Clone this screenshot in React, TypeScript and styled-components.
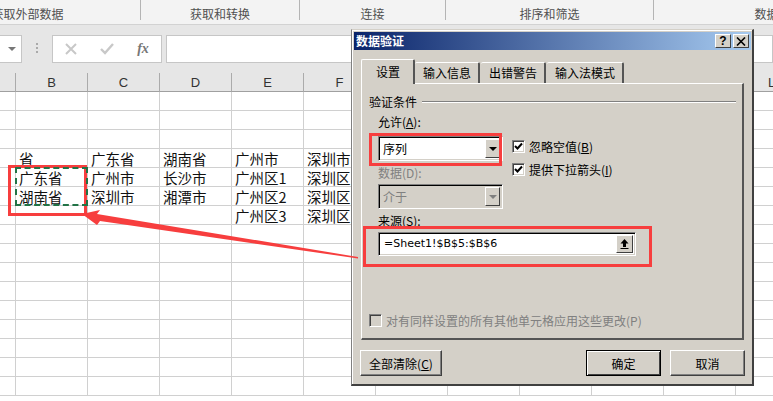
import React from "react";
import styled, { createGlobalStyle } from "styled-components";

const GlobalStyle = createGlobalStyle`
  html, body {
    margin: 0;
    padding: 0;
    background: #fff;
  }
  * {
    box-sizing: border-box;
  }
`;

const CJK = `"Noto Sans CJK SC", "Liberation Sans", sans-serif`;

const Page = styled.div`
  position: relative;
  width: 773px;
  height: 401px;
  overflow: hidden;
  background: #fff;
  font-family: ${CJK};
`;

const Ribbon = styled.div`
  display: grid;
  grid-template-columns: 226px 159px 146px 208px 250px;
  width: 989px;
  height: 25px;
  margin-left: -85px;
  background: #f3f3f3;
  border-bottom: 1px solid #d2d2d2;
`;

const RibbonGroup = styled.div`
  height: 20px;
  padding-top: 7px;
  font-size: 12px;
  line-height: 14px;
  color: #505050;
  text-align: center;
  border-right: 1px solid #b4b4b4;
`;

const FormulaBar = styled.div`
  display: flex;
  align-items: center;
  height: 48px;
  padding-bottom: 1px;
  background: #e6e6e6;
`;

const NameBox = styled.div`
  display: flex;
  align-items: center;
  justify-content: flex-end;
  width: 22px;
  height: 28px;
  padding-right: 5px;
  background: #fff;
  border: 1px solid #c6c6c6;
  border-left: 0;
`;

const SmallCaret = styled.span`
  width: 0;
  height: 0;
  border-left: 4px solid transparent;
  border-right: 4px solid transparent;
  border-top: 4px solid #777;
`;

const Grip = styled.div`
  width: 2px;
  height: 11px;
  margin: 0 14px;
  background: repeating-linear-gradient(#aaa 0 2px, transparent 2px 4px);
`;

const FormulaButtons = styled.div`
  display: grid;
  grid-template-columns: repeat(3, 36px);
  align-items: center;
  justify-items: center;
  width: 110px;
  height: 28px;
  background: #fff;
  border: 1px solid #c6c6c6;
`;

const FxLabel = styled.span`
  font-family: "Liberation Serif", serif;
  font-size: 14px;
  font-style: italic;
  font-weight: bold;
  color: #777;
`;

const FormulaInput = styled.div`
  flex: 1;
  height: 28px;
  margin-left: 4px;
  background: #fff;
  border: 1px solid #c6c6c6;
`;

const Sheet = styled.div`
  display: grid;
  grid-template-columns: 16px repeat(11, 72px);
  grid-auto-rows: 19px;
  width: 808px;
`;

const ColumnHead = styled.div`
  height: 19px;
  padding-top: 2px;
  font-family: "Liberation Sans", sans-serif;
  font-size: 13px;
  line-height: 16px;
  color: #333;
  text-align: center;
  background: #e6e6e6;
  border-right: 1px solid #ababab;
  border-bottom: 1px solid #a0a0a0;
`;

const Cell = styled.div`
  overflow: hidden;
  padding-left: 3px;
  font-size: 14.5px;
  line-height: 19px;
  white-space: nowrap;
  color: #111;
  border-right: 1px solid #d0d0d0;
  border-bottom: 1px solid #d0d0d0;
`;

const CopyMarquee = styled.div`
  position: absolute;
  left: 15px;
  top: 167px;
  width: 73px;
  height: 39px;
  border: 2px dashed #217346;
`;

const Callout = styled.div<{ $x: number; $y: number; $w: number; $h: number }>`
  position: absolute;
  left: ${(p) => p.$x}px;
  top: ${(p) => p.$y}px;
  width: ${(p) => p.$w}px;
  height: ${(p) => p.$h}px;
  border: 3px solid #f73e3e;
  pointer-events: none;
`;

const ArrowLayer = styled.svg`
  position: absolute;
  left: 0;
  top: 0;
  pointer-events: none;
`;

const Dialog = styled.div`
  position: absolute;
  left: 351px;
  top: 29px;
  width: 403px;
  height: 357px;
  padding: 2px 1px 0 2px;
  font-size: 12px;
  color: #000;
  background: #d4d0c8;
  border-right: 2px solid #404040;
  border-bottom: 2px solid #404040;
  border-top: 1px solid #d4d0c8;
  border-left: 1px solid #808080;
  box-shadow: inset 1px 1px 0 #fff;
`;

const TitleBar = styled.div`
  display: flex;
  align-items: center;
  justify-content: space-between;
  height: 18px;
  padding: 0 2px;
  background: linear-gradient(90deg, #0a246a, #a6caf0);
`;

const TitleText = styled.span`
  font-size: 12px;
  font-weight: bold;
  line-height: 14px;
  color: #fff;
`;

const TitleButtons = styled.div`
  display: flex;
  gap: 2px;
`;

const TitleButton = styled.div`
  display: flex;
  align-items: center;
  justify-content: center;
  width: 16px;
  height: 14px;
  font-family: "Liberation Sans", sans-serif;
  font-size: 12px;
  font-weight: bold;
  background: #d4d0c8;
  border: 1px solid;
  border-color: #fff #404040 #404040 #fff;
`;

const Content = styled.div`
  padding: 9px 7px 0;
`;

const TabRow = styled.div`
  display: flex;
  align-items: flex-end;
  height: 24px;
`;

const Tab = styled.div<{ $active?: boolean }>`
  position: relative;
  height: ${(p) => (p.$active ? 25 : 21)}px;
  margin-right: ${(p) => (p.$active ? 0 : 1)}px;
  margin-bottom: ${(p) => (p.$active ? -1 : 0)}px;
  padding: ${(p) => (p.$active ? "5px 13px 0 14px" : "3px 7px 0 8px")};
  font-size: 12px;
  line-height: 14px;
  white-space: nowrap;
  background: #d4d0c8;
  border-top: 1px solid #fff;
  border-left: ${(p) => (p.$active ? "1px solid #fff" : "0")};
  border-right: 2px solid #555;
  border-radius: 2px 2px 0 0;
  z-index: ${(p) => (p.$active ? 1 : 0)};
`;

const TabPanel = styled.div`
  display: flex;
  flex-direction: column;
  height: 257px;
  padding: 11px 7px 11px 7px;
  border-top: 1px solid #fff;
  border-left: 1px solid #fff;
  border-right: 2px solid #555;
  border-bottom: 2px solid #555;
`;

const Legend = styled.div`
  display: flex;
  align-items: center;
  gap: 5px;
  height: 14px;
  line-height: 14px;
  white-space: nowrap;
`;

const LegendRule = styled.span`
  flex: none;
  width: 314px;
  height: 2px;
  border-top: 1px solid #808080;
  border-bottom: 1px solid #fff;
`;

const Fields = styled.div`
  margin-left: 9px;
  padding-top: 6px;
`;

const TopFields = styled.div`
  display: flex;
`;

const FieldColumn = styled.div`
  width: 125px;
`;

const FieldLabel = styled.div<{ $disabled?: boolean; $gap: number }>`
  height: 14px;
  margin-bottom: ${(p) => p.$gap}px;
  line-height: 14px;
  white-space: nowrap;
  color: ${(p) => (p.$disabled ? "#808080" : "#000")};
`;

const SunkenBox = styled.div<{ $disabled?: boolean; $width: number; $height: number }>`
  display: flex;
  align-items: center;
  justify-content: space-between;
  width: ${(p) => p.$width}px;
  height: ${(p) => p.$height}px;
  padding: 2px;
  color: ${(p) => (p.$disabled ? "#808080" : "#000")};
  background: ${(p) => (p.$disabled ? "#d4d0c8" : "#fff")};
  border: 1px solid;
  border-color: #808080 #fff #fff #808080;
  box-shadow: inset 1px 1px 0 #000, inset -1px -1px 0 #d4d0c8;
`;

const BoxText = styled.span`
  padding-left: 2px;
  font-size: 12px;
  line-height: 16px;
`;

const SourceText = styled.span`
  padding-left: 3px;
  font-family: "DejaVu Sans", sans-serif;
  font-size: 11px;
  line-height: 14px;
`;

const BoxButton = styled.div<{ $width: number }>`
  display: flex;
  align-items: center;
  justify-content: center;
  flex: none;
  align-self: stretch;
  width: ${(p) => p.$width}px;
  background: #d4d0c8;
  border: 1px solid;
  border-color: #fff #404040 #404040 #fff;
`;

const DownCaret = styled.span<{ $disabled?: boolean }>`
  width: 0;
  height: 0;
  border-left: 4px solid transparent;
  border-right: 4px solid transparent;
  border-top: 4px solid ${(p) => (p.$disabled ? "#808080" : "#000")};
`;

const SecondLabel = styled.div`
  margin-top: 5px;
`;

const Checks = styled.div`
  display: flex;
  flex-direction: column;
  gap: 10px;
  margin-left: 9px;
  padding-top: 25px;
`;

const CheckRow = styled.div<{ $disabled?: boolean }>`
  display: flex;
  align-items: center;
  gap: 4px;
  height: 13px;
  white-space: nowrap;
  line-height: 14px;
  color: ${(p) => (p.$disabled ? "#808080" : "#000")};
`;

const CheckBox = styled.span<{ $disabled?: boolean }>`
  display: flex;
  flex: none;
  width: 13px;
  height: 13px;
  background: ${(p) => (p.$disabled ? "#d4d0c8" : "#fff")};
  border: 1px solid;
  border-color: #808080 #fff #fff #808080;
  box-shadow: inset 1px 1px 0 #404040, inset -1px -1px 0 #d4d0c8;
`;

const ApplyAll = styled.div`
  margin-top: auto;
`;

const Footer = styled.div`
  display: flex;
  margin: 10px -1px 0;
`;

const PushButton = styled.div<{ $width: number; $primary?: boolean; $push?: boolean }>`
  display: flex;
  align-items: center;
  justify-content: center;
  width: ${(p) => p.$width}px;
  height: 26px;
  margin-left: ${(p) => (p.$push ? "auto" : 0)};
  margin-right: ${(p) => (p.$primary ? 9 : 0)}px;
  font-size: 12px;
  background: #d4d0c8;
  border: 1px solid;
  border-color: ${(p) => (p.$primary ? "#000" : "#fff #404040 #404040 #fff")};
  box-shadow: ${(p) =>
    p.$primary
      ? "inset 1px 1px 0 #fff, inset -1px -1px 0 #404040"
      : "inset -1px -1px 0 #808080"};
`;

const columns = ["", "B", "C", "D", "E", "F", "G", "H", "I", "J", "K", "L"];

const rows: string[][] = [
  [],
  [],
  [],
  ["", "省", "广东省", "湖南省", "广州市", "深圳市"],
  ["", "广东省", "广州市", "长沙市", "广州区1", "深圳区"],
  ["", "湖南省", "深圳市", "湘潭市", "广州区2", "深圳区"],
  ["", "", "", "", "广州区3", "深圳区"],
  [], [], [], [], [], [], [], [], [],
];

function Tick() {
  return (
    <svg width="11" height="11" viewBox="0 0 11 11">
      <path d="M2 5 L4.5 7.5 L9 2.5" fill="none" stroke="#000" strokeWidth="2" />
    </svg>
  );
}

export default function App() {
  return (
    <Page>
      <GlobalStyle />
      <Ribbon>
        <RibbonGroup>获取外部数据</RibbonGroup>
        <RibbonGroup>获取和转换</RibbonGroup>
        <RibbonGroup>连接</RibbonGroup>
        <RibbonGroup>排序和筛选</RibbonGroup>
        <RibbonGroup>数据工具</RibbonGroup>
      </Ribbon>

      <FormulaBar>
        <NameBox>
          <SmallCaret />
        </NameBox>
        <Grip />
        <FormulaButtons>
          <svg width="12" height="12" viewBox="0 0 12 12">
            <path d="M1 1 L11 11 M11 1 L1 11" stroke="#c8c8c8" strokeWidth="2" />
          </svg>
          <svg width="14" height="12" viewBox="0 0 14 12">
            <path d="M1 6 L5 10 L13 1" fill="none" stroke="#c8c8c8" strokeWidth="2.4" />
          </svg>
          <FxLabel>fx</FxLabel>
        </FormulaButtons>
        <FormulaInput />
      </FormulaBar>

      <Sheet>
        {columns.map((name, i) => (
          <ColumnHead key={i}>{name}</ColumnHead>
        ))}
        {rows.map((row, r) =>
          columns.map((_, c) => <Cell key={`${r}-${c}`}>{row[c] ?? ""}</Cell>)
        )}
      </Sheet>

      <Callout $x={8} $y={165} $w={79} $h={51} />
      <CopyMarquee />

      <Dialog>
        <TitleBar>
          <TitleText>数据验证</TitleText>
          <TitleButtons>
            <TitleButton>?</TitleButton>
            <TitleButton>
              <svg width="10" height="9" viewBox="0 0 10 9">
                <path d="M1 0.5 L9 8.5 M9 0.5 L1 8.5" stroke="#000" strokeWidth="1.6" />
              </svg>
            </TitleButton>
          </TitleButtons>
        </TitleBar>
        <Content>
          <TabRow>
            <Tab $active>设置</Tab>
            <Tab>输入信息</Tab>
            <Tab>出错警告</Tab>
            <Tab>输入法模式</Tab>
          </TabRow>
          <TabPanel>
            <Legend>
              验证条件
              <LegendRule />
            </Legend>
            <Fields>
              <TopFields>
                <FieldColumn>
                  <FieldLabel $gap={7}>
                    允许(<u>A</u>):
                  </FieldLabel>
                  <SunkenBox $width={125} $height={25}>
                    <BoxText>序列</BoxText>
                    <BoxButton $width={15}>
                      <DownCaret />
                    </BoxButton>
                  </SunkenBox>
                  <SecondLabel>
                    <FieldLabel $disabled $gap={4}>
                      数据(D):
                    </FieldLabel>
                  </SecondLabel>
                  <SunkenBox $disabled $width={125} $height={25}>
                    <BoxText>介于</BoxText>
                    <BoxButton $width={15}>
                      <DownCaret $disabled />
                    </BoxButton>
                  </SunkenBox>
                </FieldColumn>
                <Checks>
                  <CheckRow>
                    <CheckBox>
                      <Tick />
                    </CheckBox>
                    <span>
                      忽略空值(<u>B</u>)
                    </span>
                  </CheckRow>
                  <CheckRow>
                    <CheckBox>
                      <Tick />
                    </CheckBox>
                    <span>
                      提供下拉箭头(<u>I</u>)
                    </span>
                  </CheckRow>
                </Checks>
              </TopFields>
              <SecondLabel>
                <FieldLabel $gap={4}>来源(S):</FieldLabel>
              </SecondLabel>
              <SunkenBox $width={258} $height={24}>
                <SourceText>=Sheet1!$B$5:$B$6</SourceText>
                <BoxButton $width={17}>
                  <svg width="11" height="12" viewBox="0 0 11 12">
                    <path d="M5.5 1 L9.5 5.5 H7 V9 H4 V5.5 H1.5 Z" fill="#000" />
                    <path d="M1.5 10.5 H9.5" stroke="#000" strokeWidth="1" fill="none" />
                  </svg>
                </BoxButton>
              </SunkenBox>
            </Fields>
            <ApplyAll>
              <CheckRow $disabled>
                <CheckBox $disabled />
                <span>对有同样设置的所有其他单元格应用这些更改(P)</span>
              </CheckRow>
            </ApplyAll>
          </TabPanel>
          <Footer>
            <PushButton $width={82}>
              全部清除(<u>C</u>)
            </PushButton>
            <PushButton $width={75} $primary $push>
              确定
            </PushButton>
            <PushButton $width={75}>取消</PushButton>
          </Footer>
        </Content>
      </Dialog>

      <Callout $x={369} $y={133} $w={133} $h={33} />
      <Callout $x={363} $y={226} $w={289} $h={41} />

      <ArrowLayer width="773" height="401" viewBox="0 0 773 401">
        <path
          d="M82 214 L100 210 L97 214 L358 257 L358 258.5 L100 221 L97 225 Z"
          fill="#f73e3e"
        />
      </ArrowLayer>
    </Page>
  );
}
